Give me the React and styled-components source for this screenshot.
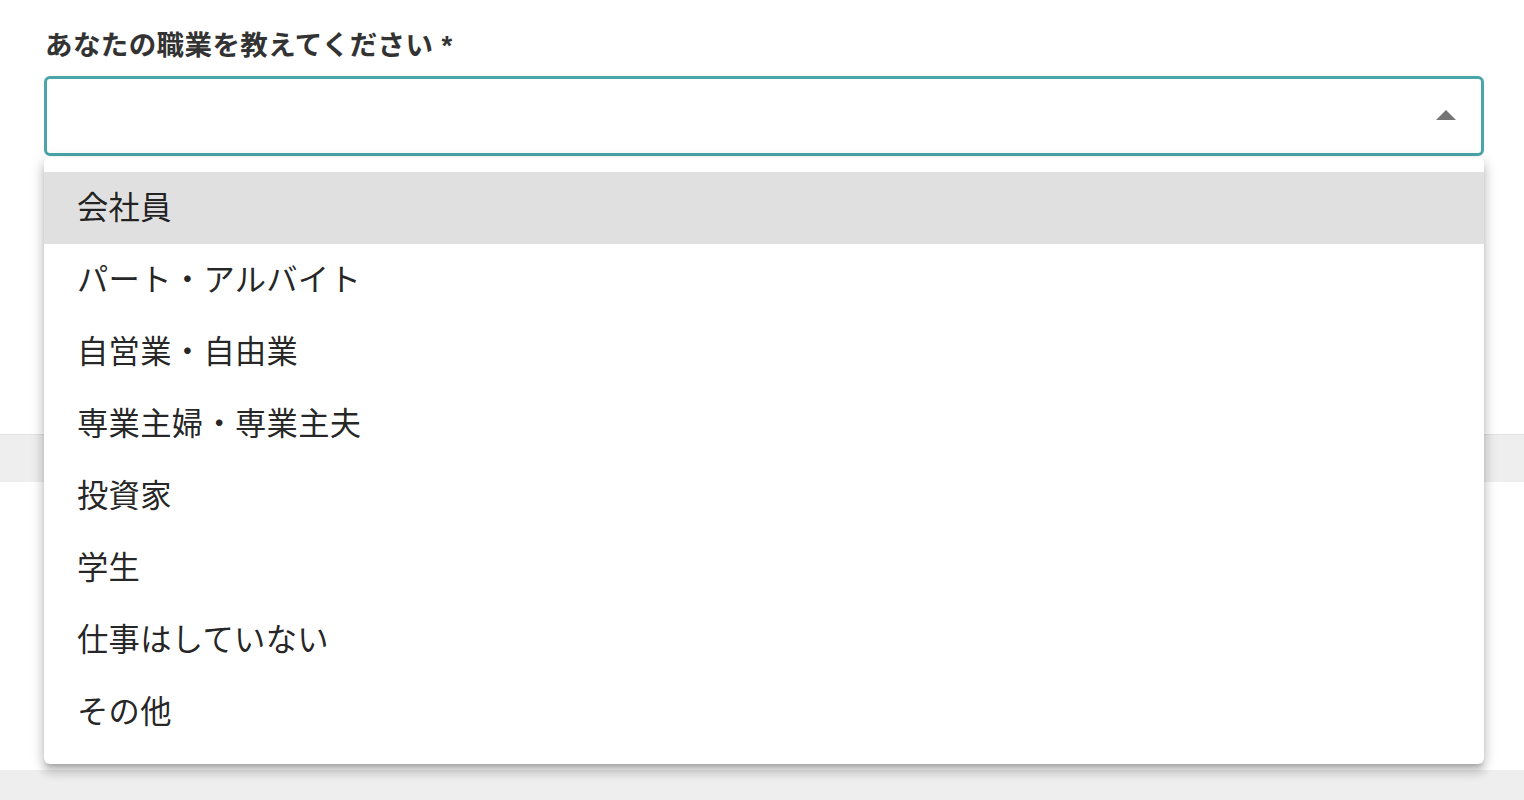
import React, { useState } from 'react';
import styled, { createGlobalStyle } from 'styled-components';

const GlobalStyle = createGlobalStyle`
    html, body {
        margin: 0;
        padding: 0;
        background: #ffffff;
        font-family: "Noto Sans CJK JP", "Noto Sans", sans-serif;
    }
`;

const options = [
    "会社員",
    "パート・アルバイト",
    "自営業・自由業",
    "専業主婦・専業主夫",
    "投資家",
    "学生",
    "仕事はしていない",
    "その他",
];

const App = () => {
    const [hovered, setHovered] = useState(0);

    return (
        <Page>
            <GlobalStyle />
            <Form>
                <Label>
                    あなたの職業を教えてください<Required>*</Required>
                </Label>
                <Field>
                    <SelectBox>
                        <Arrow viewBox="0 0 20 10" aria-hidden="true">
                            <path d="M0 10 L10 0 L20 10 Z" fill="#757575" />
                        </Arrow>
                    </SelectBox>
                    <Menu>
                        {options.map((opt, i) => (
                            <Item
                                key={opt}
                                $active={i === hovered}
                                onMouseEnter={() => setHovered(i)}
                            >
                                {opt}
                            </Item>
                        ))}
                    </Menu>
                </Field>
            </Form>
            <Band />
            <Blank />
            <Footer />
        </Page>
    );
};

export default App;

const Page = styled.div`
    width: 100%;
    height: 800px;
    display: flex;
    flex-direction: column;
    overflow: hidden;
`;

const Form = styled.div`
    padding: 23px 40px 0 44px;
    display: flex;
    flex-direction: column;
    height: 410px;
    box-sizing: border-box;
`;

const Label = styled.div`
    font-size: 27.5px;
    font-weight: 700;
    color: #333333;
    line-height: 40px;
    letter-spacing: 0.4px;
    margin-left: 1px;
    margin-bottom: 10px;
`;

const Required = styled.span`
    margin-left: 8px;
    font-family: "Liberation Sans", sans-serif;
`;

const Field = styled.div`
    position: relative;
    width: 1440px;
`;

const SelectBox = styled.div`
    height: 80px;
    box-sizing: border-box;
    border: 3px solid #4aa6a8;
    border-radius: 6px;
    background: #ffffff;
    display: flex;
    align-items: center;
    justify-content: flex-end;
    padding-right: 25px;
`;

const Arrow = styled.svg`
    width: 20px;
    height: 10px;
    margin-top: -2px;
`;

const Menu = styled.ul`
    position: absolute;
    z-index: 10;
    top: 81px;
    left: 0;
    width: 1440px;
    margin: 0;
    padding: 15px 0 16px;
    list-style: none;
    background: #ffffff;
    border-radius: 6px;
    box-shadow: 0px 5px 5px -3px rgba(0, 0, 0, 0.2),
        0px 8px 10px 1px rgba(0, 0, 0, 0.14),
        0px 3px 14px 2px rgba(0, 0, 0, 0.12);
`;

const Item = styled.li`
    height: 72px;
    display: flex;
    align-items: center;
    padding-left: 33px;
    padding-bottom: 5px;
    box-sizing: border-box;
    font-size: 31.3px;
    letter-spacing: 0.3px;
    color: rgba(0, 0, 0, 0.87);
    background: ${(p) => (p.$active ? '#e0e0e0' : 'transparent')};
    cursor: pointer;
`;

const Band = styled.div`
    margin-top: 24px;
    height: 47px;
    border-top: 1px solid #e2e2e2;
    background: #eeeeee;
`;

const Blank = styled.div`
    height: 288px;
    background: #ffffff;
`;

const Footer = styled.div`
    flex: 1;
    background: #eeeeee;
`;
